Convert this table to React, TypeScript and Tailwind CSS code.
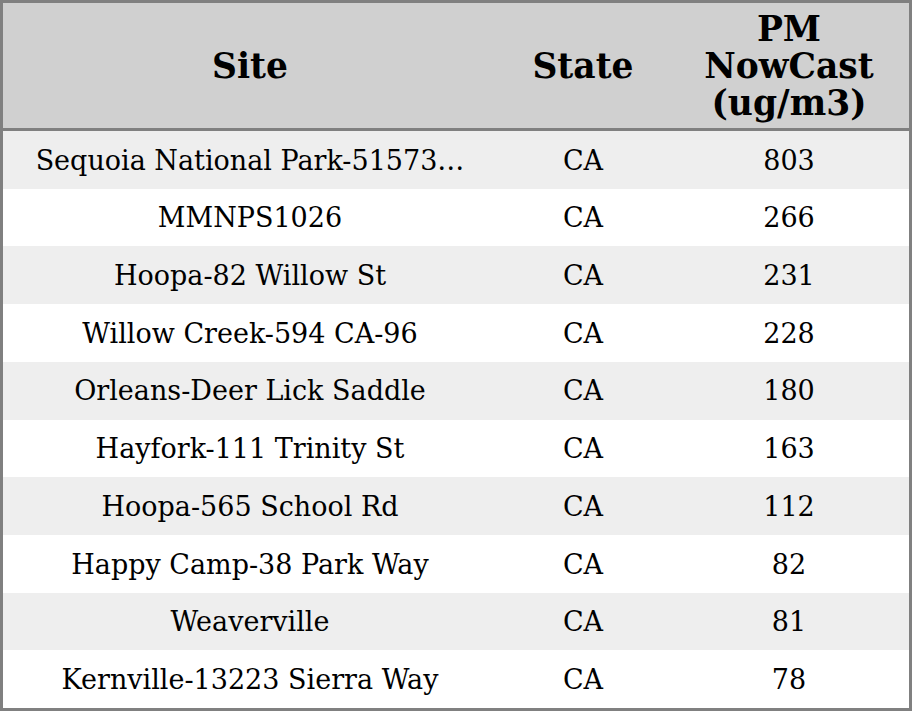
import React from 'react';

const rows: [string, string, number][] = [
  ['Sequoia National Park-51573…', 'CA', 803],
  ['MMNPS1026', 'CA', 266],
  ['Hoopa-82 Willow St', 'CA', 231],
  ['Willow Creek-594 CA-96', 'CA', 228],
  ['Orleans-Deer Lick Saddle', 'CA', 180],
  ['Hayfork-111 Trinity St', 'CA', 163],
  ['Hoopa-565 School Rd', 'CA', 112],
  ['Happy Camp-38 Park Way', 'CA', 82],
  ['Weaverville', 'CA', 81],
  ['Kernville-13223 Sierra Way', 'CA', 78],
];

const App: React.FC = () => {
  return (
    <div className="w-[912px] h-[711px] border-[3px] border-[#808080] bg-white text-black font-['DejaVu_Serif',serif] flex flex-col">
      <div className="h-[128px] shrink-0 pt-[2px] bg-[#d0d0d0] grid grid-cols-[494px_172px_1fr] items-center text-center font-bold text-[34.5px] leading-[37px] border-b-[3px] border-[#808080] box-border">
        <div>Site</div>
        <div>State</div>
        <div>
          PM
          <br />
          NowCast
          <br />
          (ug/m3)
        </div>
      </div>
      <div className="flex-1 flex flex-col">
        {rows.map(([site, state, value], i) => (
          <div
            key={site}
            className={`flex-1 pt-[2px] grid grid-cols-[494px_172px_1fr] items-center text-center text-[27px] ${
              i % 2 === 0 ? 'bg-[#eeeeee]' : 'bg-white'
            }`}
          >
            <div>{site}</div>
            <div>{state}</div>
            <div>{value}</div>
          </div>
        ))}
      </div>
    </div>
  );
};

export default App;
